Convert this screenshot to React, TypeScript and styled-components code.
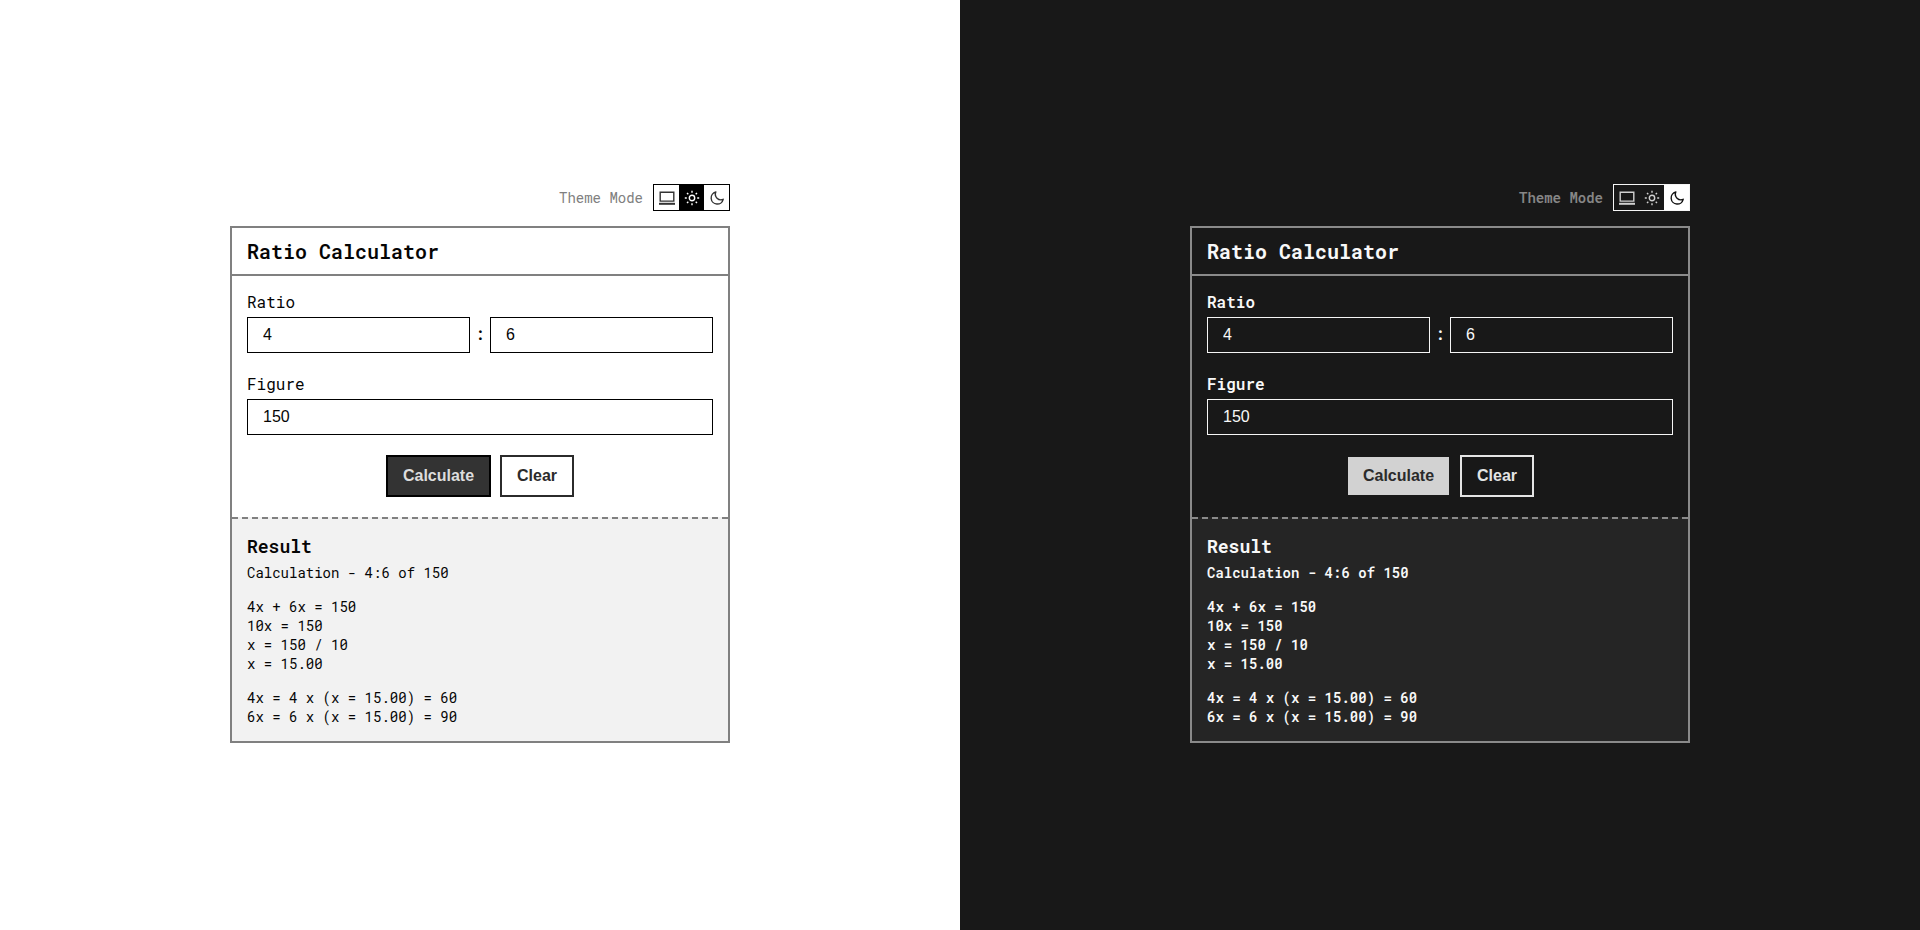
import React from "react";
import styled, { ThemeProvider, createGlobalStyle } from "styled-components";

const light = {
  page: "#ffffff",
  text: "#050505",
  weight: 430,
  headingWeight: 600,
  muted: "#808080",
  line: "#808080",
  field: "#000000",
  icon: "#333333",
  activeBg: "#000000",
  activeIcon: "#ffffff",
  primaryBg: "#333333",
  primaryText: "#dddddd",
  primaryBorder: "#000000",
  ghost: "#2b2b2b",
  panel: "#f2f2f2",
};

const dark: typeof light = {
  page: "#181818",
  text: "#f8f8f8",
  weight: 570,
  headingWeight: 700,
  muted: "#868686",
  line: "#8a8a8a",
  field: "#f5f5f5",
  icon: "#d0d0d0",
  activeBg: "#ffffff",
  activeIcon: "#111111",
  primaryBg: "#d2d2d2",
  primaryText: "#2b2b2b",
  primaryBorder: "#181818",
  ghost: "#e4e4e4",
  panel: "#252525",
};

const GlobalStyle = createGlobalStyle`
  * { box-sizing: border-box; }
  body { margin: 0; background: #fff; }
`;

const Split = styled.main`
  display: grid;
  grid-template-columns: 1fr 1fr;
  height: 930px;
  overflow: hidden;
`;

const Pane = styled.section`
  display: flex;
  flex-direction: column;
  align-items: center;
  padding-top: 184px;
  background: ${(p) => p.theme.page};
  color: ${(p) => p.theme.text};
  font-family: "Roboto Mono", "DejaVu Sans Mono", "Liberation Mono", monospace;
  font-weight: ${(p) => p.theme.weight};
`;

const Column = styled.div`
  width: 500px;
`;

const ModeBar = styled.div`
  display: flex;
  justify-content: flex-end;
  align-items: center;
  gap: 10px;
  height: 27px;
  margin-bottom: 15px;
`;

const ModeLabel = styled.span`
  font-size: 14px;
  line-height: 19px;
  color: ${(p) => p.theme.muted};
`;

const Switcher = styled.div`
  display: flex;
  width: 77px;
  height: 27px;
  border: 1px solid ${(p) => p.theme.field};
`;

const ModeButton = styled.button<{ $active?: boolean }>`
  flex: 1;
  display: flex;
  align-items: center;
  justify-content: center;
  padding: 0;
  border: 0;
  background: ${(p) => (p.$active ? p.theme.activeBg : "transparent")};
  color: ${(p) => (p.$active ? p.theme.activeIcon : p.theme.icon)};
`;

const Icon = styled.svg`
  width: 16px;
  height: 16px;
  display: block;
  fill: none;
  stroke: currentColor;
  stroke-width: 1.4;
`;

const Card = styled.div`
  height: 517px;
  border: 2px solid ${(p) => p.theme.line};
  display: flex;
  flex-direction: column;
`;

const Title = styled.h1`
  margin: 0;
  height: 48px;
  padding: 0 15px;
  border-bottom: 2px solid ${(p) => p.theme.line};
  font-size: 20px;
  font-weight: ${(p) => p.theme.headingWeight};
  line-height: 46px;
`;

const Form = styled.form`
  padding: 15px 15px 20px;
`;

const Label = styled.label`
  display: block;
  height: 26px;
  font-size: 16px;
  line-height: 21px;
`;

const Fields = styled.div`
  display: flex;
  margin-bottom: 20px;
`;

const Colon = styled.span`
  width: 20px;
  text-align: center;
  font-size: 16px;
  font-weight: 500;
  line-height: 34px;
`;

const Input = styled.input`
  flex: 1;
  min-width: 0;
  height: 36px;
  padding: 0 15px;
  border: 1px solid ${(p) => p.theme.field};
  border-radius: 0;
  background: transparent;
  color: inherit;
  font: 16px "Liberation Sans", Arial, sans-serif;
`;

const Actions = styled.div`
  display: flex;
  justify-content: center;
  gap: 9px;
`;

const Button = styled.button<{ $primary?: boolean }>`
  width: ${(p) => (p.$primary ? 105 : 74)}px;
  height: 42px;
  padding: 0;
  border: 2px solid ${(p) => (p.$primary ? p.theme.primaryBorder : p.theme.ghost)};
  background: ${(p) => (p.$primary ? p.theme.primaryBg : "transparent")};
  color: ${(p) => (p.$primary ? p.theme.primaryText : p.theme.ghost)};
  font: bold 16px "Liberation Sans", Arial, sans-serif;
`;

const Result = styled.div`
  flex: 1;
  padding: 15px 15px 0;
  border-top: 2px dashed ${(p) => p.theme.line};
  background: ${(p) => p.theme.panel};
`;

const ResultTitle = styled.h2`
  margin: 0 0 5px;
  font-size: 18px;
  font-weight: ${(p) => p.theme.headingWeight};
  line-height: 24px;
`;

const Lines = styled.p`
  margin: 0 0 15px;
  font-size: 14px;
  line-height: 19px;
  white-space: pre-line;
`;

const LaptopIcon = () => (
  <Icon viewBox="0 0 16 16">
    <path d="M1.2 2.2h13.6v8.9H1.2z" />
    <path d="M0 13.8h16" strokeWidth="2" />
  </Icon>
);

const SunIcon = () => (
  <Icon viewBox="0 0 16 16">
    <circle cx="8" cy="8" r="2.7" />
    <path d="M8 .8v2M8 13.2v2M.8 8h2M13.2 8h2M3 3l1.3 1.3M11.7 11.7l1.3 1.3M3 13l1.3-1.3M11.7 4.3l1.3-1.3" />
  </Icon>
);

const MoonIcon = () => (
  <Icon viewBox="0 0 16 16">
    <path d="M6.8 2A6.1 6.1 0 1 0 14.2 9.3A5.6 5.6 0 0 1 6.8 2z" strokeLinejoin="round" />
  </Icon>
);

function Calculator({ mode }: { mode: "light" | "dark" }) {
  return (
    <ThemeProvider theme={mode === "light" ? light : dark}>
      <Pane>
        <Column>
          <ModeBar>
            <ModeLabel>Theme Mode</ModeLabel>
            <Switcher>
              <ModeButton aria-label="System"><LaptopIcon /></ModeButton>
              <ModeButton aria-label="Light" $active={mode === "light"}><SunIcon /></ModeButton>
              <ModeButton aria-label="Dark" $active={mode === "dark"}><MoonIcon /></ModeButton>
            </Switcher>
          </ModeBar>
          <Card>
            <Title>Ratio Calculator</Title>
            <Form onSubmit={(e) => e.preventDefault()}>
              <Label>Ratio</Label>
              <Fields>
                <Input defaultValue="4" />
                <Colon>:</Colon>
                <Input defaultValue="6" />
              </Fields>
              <Label>Figure</Label>
              <Fields>
                <Input defaultValue="150" />
              </Fields>
              <Actions>
                <Button $primary>Calculate</Button>
                <Button type="button">Clear</Button>
              </Actions>
            </Form>
            <Result>
              <ResultTitle>Result</ResultTitle>
              <Lines>Calculation - 4:6 of 150</Lines>
              <Lines>{"4x + 6x = 150\n10x = 150\nx = 150 / 10\nx = 15.00"}</Lines>
              <Lines>{"4x = 4 x (x = 15.00) = 60\n6x = 6 x (x = 15.00) = 90"}</Lines>
            </Result>
          </Card>
        </Column>
      </Pane>
    </ThemeProvider>
  );
}

export default function App() {
  return (
    <>
      <GlobalStyle />
      <Split>
        <Calculator mode="light" />
        <Calculator mode="dark" />
      </Split>
    </>
  );
}
